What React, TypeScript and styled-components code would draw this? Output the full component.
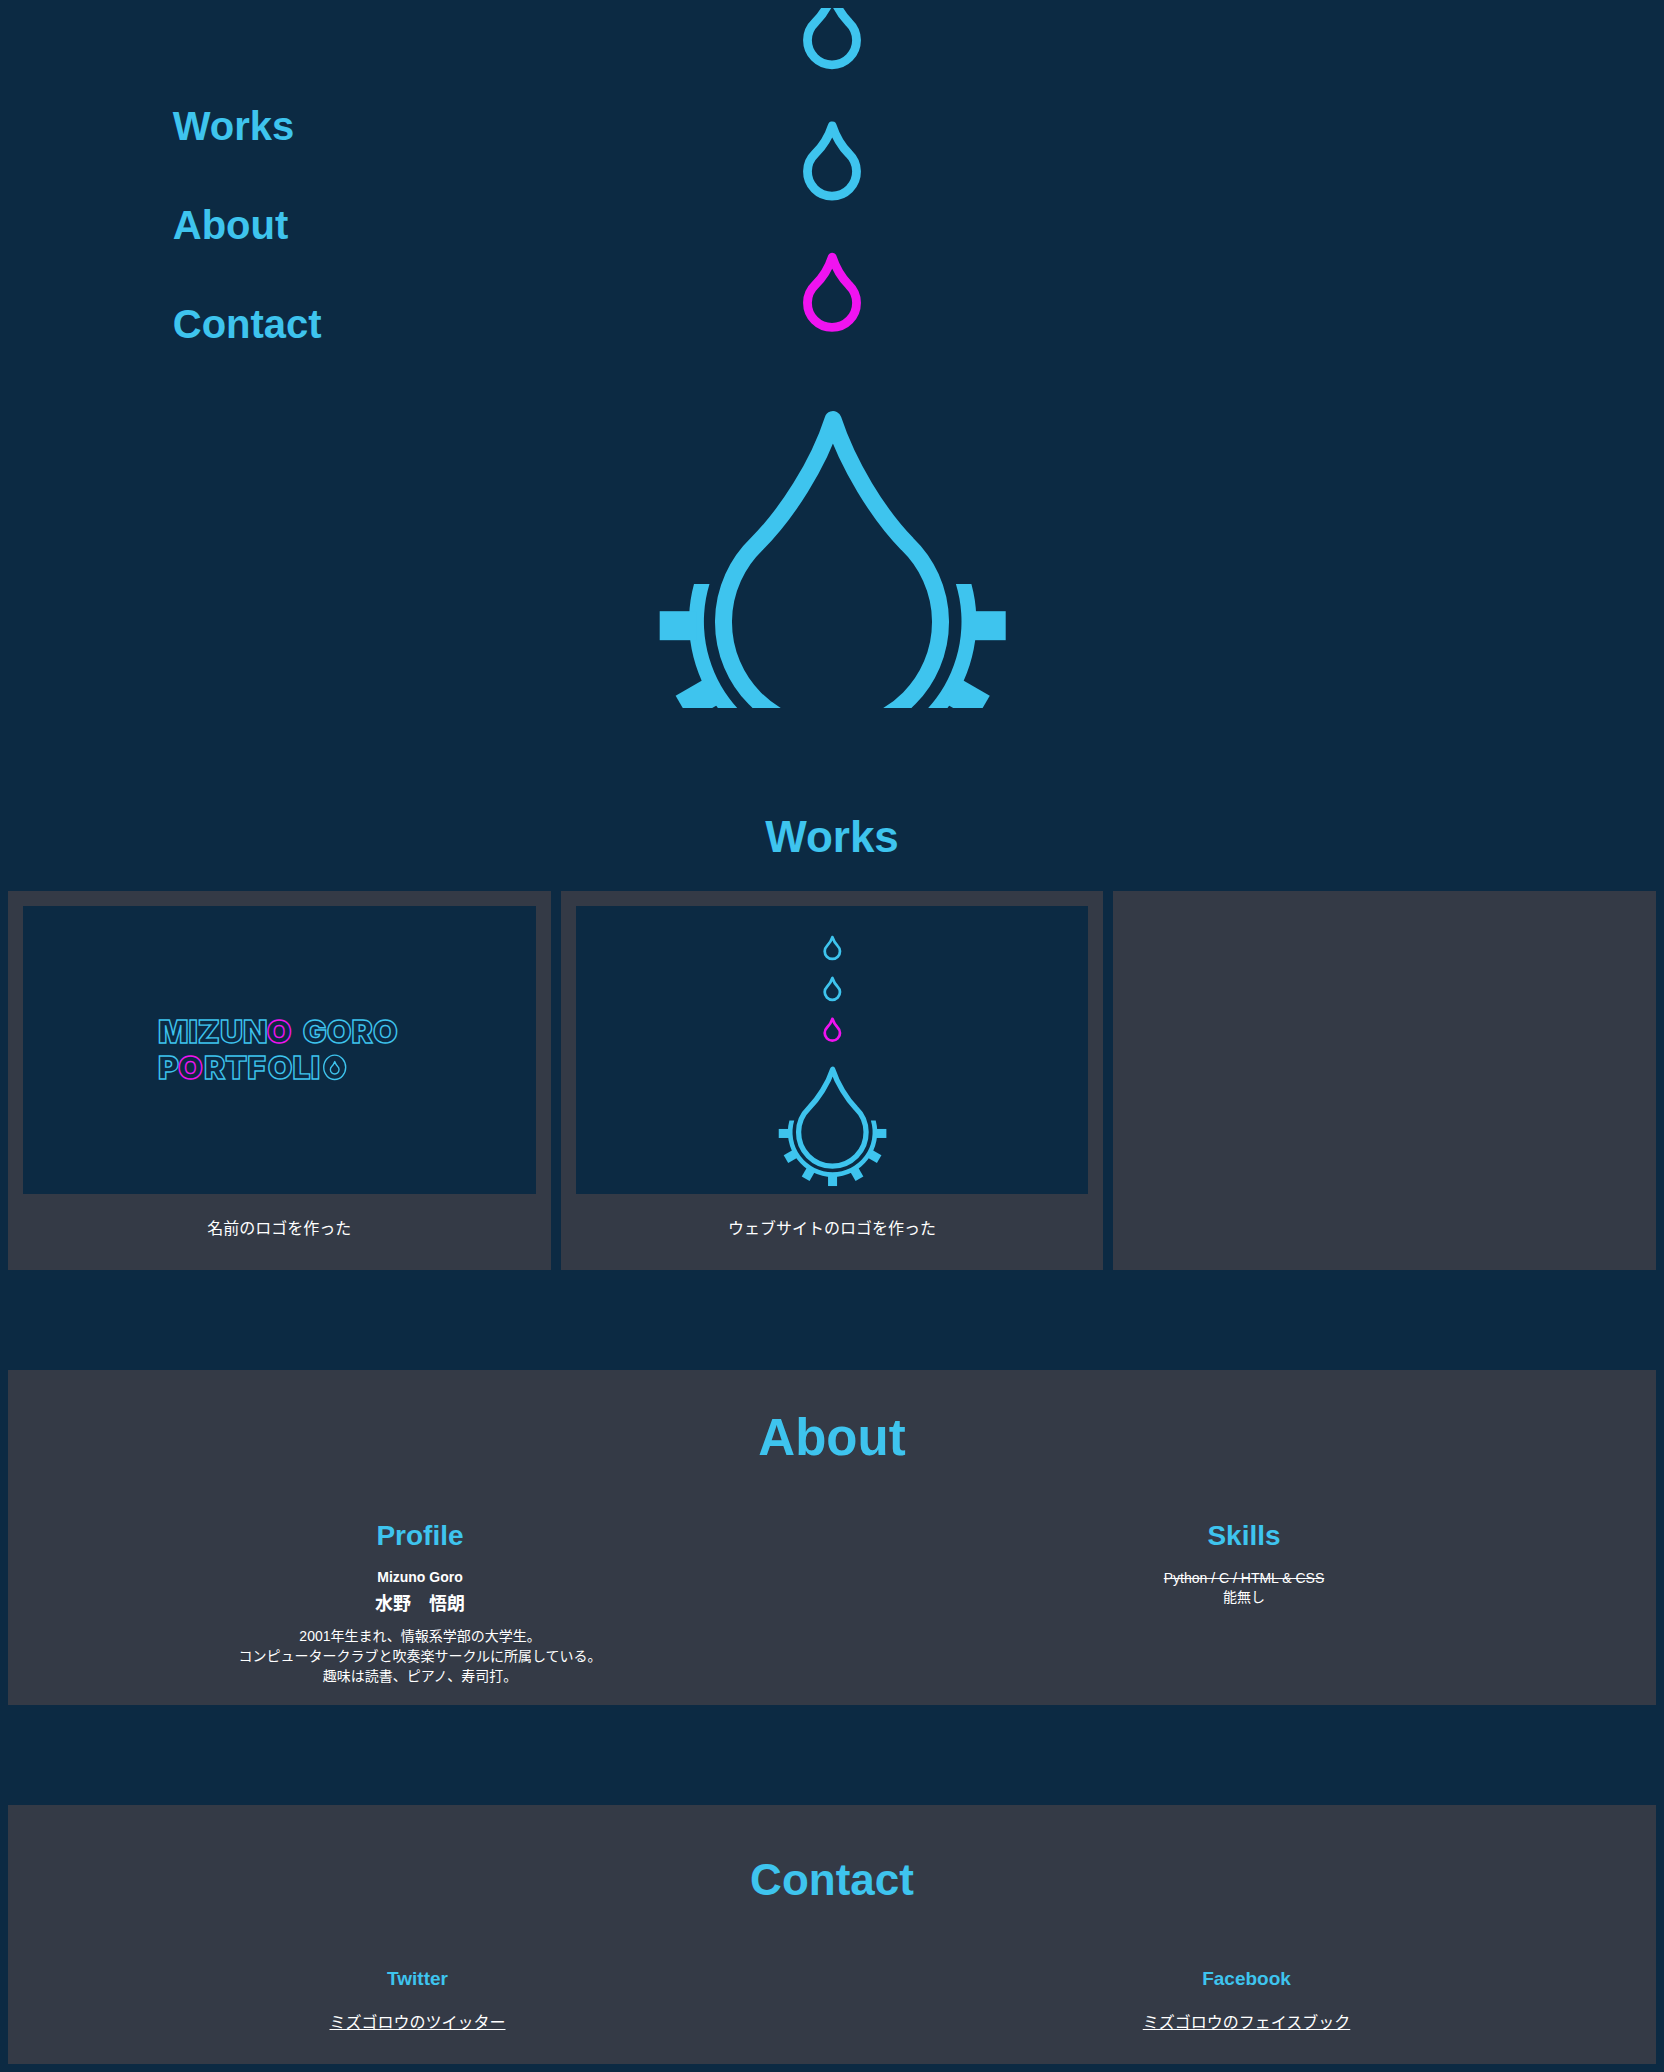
import React from "react";
import styled, { createGlobalStyle } from "styled-components";

const colors = {
  page: "#0c2a43",
  panel: "#343a46",
  accent: "#3ec4ee",
  magenta: "#f013f0",
  text: "#ffffff",
};

const GlobalStyle = createGlobalStyle`
  body {
    margin: 8px;
    background: ${colors.page};
    color: ${colors.text};
    font-family: "Liberation Sans", "Noto Sans CJK JP", sans-serif;
    font-size: 16px;
    line-height: 24px;
  }
  h1, h2, h3, p, ul {
    margin: 0;
    padding: 0;
  }
`;

const Page = styled.div`
  display: flex;
  flex-direction: column;
  gap: 100px;
`;

const Hero = styled.header`
  display: grid;
  height: 700px;
  overflow: hidden;
  > * {
    grid-area: 1 / 1;
    min-height: 0;
  }
`;

const HeroArt = styled.svg`
  display: block;
  width: 100%;
  height: 100%;
`;

const NavList = styled.ul`
  display: flex;
  flex-direction: column;
  align-items: flex-start;
  gap: 53px;
  padding: 95px 10% 0;
  list-style: none;
`;

const NavLink = styled.a`
  display: block;
  color: ${colors.accent};
  font-size: 40px;
  font-weight: bold;
  line-height: 46px;
  text-decoration: none;
`;

const Section = styled.section<{ $top: number }>`
  padding-top: ${(p) => p.$top}px;
  text-align: center;
`;

const Panel = styled(Section)<{ $bottom: number }>`
  padding-bottom: ${(p) => p.$bottom}px;
  background: ${colors.panel};
`;

const Title = styled.h2<{ $large?: boolean; $after: number }>`
  margin-bottom: ${(p) => p.$after}px;
  color: ${colors.accent};
  font-size: ${(p) => (p.$large ? 51 : 44)}px;
  line-height: ${(p) => (p.$large ? 58 : 50)}px;
`;

const Columns = styled.div<{ $count: number; $gap?: number }>`
  display: grid;
  grid-template-columns: repeat(${(p) => p.$count}, minmax(0, 1fr));
  gap: ${(p) => p.$gap ?? 0}px;
`;

const Card = styled.article`
  padding: 15px;
  background: ${colors.panel};
`;

const Thumb = styled.svg`
  display: block;
  width: 100%;
  aspect-ratio: 16 / 9;
  background: ${colors.page};
`;

const Caption = styled.p`
  margin: 23px 0 14px;
`;

const Subtitle = styled.h3<{ $small?: boolean }>`
  margin-bottom: ${(p) => (p.$small ? 21 : 17)}px;
  color: ${colors.accent};
  font-size: ${(p) => (p.$small ? 19 : 28)}px;
  line-height: ${(p) => (p.$small ? 22 : 32)}px;
`;

const RomanName = styled.p`
  font-size: 14px;
  font-weight: bold;
  line-height: 16px;
`;

const KanjiName = styled.p`
  margin: 6px 0 9px;
  font-size: 18px;
  font-weight: bold;
  line-height: 26px;
`;

const Body = styled.p`
  font-size: 14px;
  line-height: 20px;
`;

const Struck = styled.s`
  display: block;
  font-size: 14px;
  line-height: 18px;
`;

const OutLink = styled.a`
  color: ${colors.text};
`;

const LogoText = styled.text`
  font-family: Inter, "Liberation Sans", sans-serif;
  font-size: 32px;
  font-weight: 900;
  fill: none;
  stroke: ${colors.accent};
  stroke-width: 1.4px;
`;

const MagentaLetter = styled.tspan`
  stroke: ${colors.magenta};
`;

type DropProps = {
  x: number;
  y: number;
  scale?: number;
  stroke: number;
  color?: string;
};

// A drop whose round part has a radius of 108.5 around its origin.
const Drop = ({ x, y, scale = 1, stroke, color = colors.accent }: DropProps) => (
  <path
    transform={`translate(${x} ${y}) scale(${scale})`}
    d="M1-202.2C-13.7-156.7-45.3-107.7-75.3-77.7A108.5 108.5 0 1 0 75.3-77.7C46-107.7 16-156.7 1-202.2Z"
    fill="none"
    stroke={color}
    strokeWidth={stroke}
    strokeLinejoin="round"
  />
);

// The level teeth sit a little lower than the centre of the ring.
const teeth = [
  { angle: 0, drop: 4 },
  { angle: 30, drop: 0 },
  { angle: 60, drop: 0 },
  { angle: 90, drop: 0 },
  { angle: 120, drop: 0 },
  { angle: 150, drop: 0 },
  { angle: 180, drop: 4 },
];

const DropLogo = () => (
  <>
    <Drop x={824} y={145.7} scale={0.226} stroke={39} />
    <Drop x={824} y={277} scale={0.226} stroke={39} />
    <Drop x={824} y={408.3} scale={0.226} stroke={39} color={colors.magenta} />
    <Drop x={824} y={727.2} stroke={17} />
    <g transform="translate(824.7 727.2)" fill={colors.accent}>
      <path d="M-138.7-37.7A143.7 143.7 0 1 0 138.7-37.7H123.2A128.8 128.8 0 1 1-123.2-37.7Z" />
      {teeth.map(({ angle, drop }) => (
        <rect
          key={angle}
          x={136}
          y={-14.5}
          width={37}
          height={29}
          transform={`translate(0 ${drop}) rotate(${angle})`}
        />
      ))}
    </g>
  </>
);

const NameLogo = () => (
  <>
    <LogoText x={135} y={137}>
      MIZUN<MagentaLetter x={244}>O</MagentaLetter>{" "}
      <tspan x={280}>GORO</tspan>
    </LogoText>
    <LogoText x={135} y={173}>
      P<MagentaLetter x={155}>O</MagentaLetter>
      <tspan x={181}>RTF</tspan>
      <tspan x={245}>OLI</tspan>
    </LogoText>
    <ellipse
      cx={312}
      cy={161.7}
      rx={11}
      ry={12.2}
      fill="none"
      stroke={colors.accent}
      strokeWidth={1.4}
    />
    <Drop x={312} y={164} scale={0.04} stroke={34} />
  </>
);

const App = () => (
  <>
    <GlobalStyle />
    <Page>
      <Hero>
        <HeroArt viewBox="0 0 1648 927" preserveAspectRatio="xMidYMid slice" aria-hidden="true">
          <DropLogo />
        </HeroArt>
        <nav>
          <NavList>
            <li><NavLink href="#works">Works</NavLink></li>
            <li><NavLink href="#about">About</NavLink></li>
            <li><NavLink href="#contact">Contact</NavLink></li>
          </NavList>
        </nav>
      </Hero>

      <Section id="works" $top={4}>
        <Title $after={29}>Works</Title>
        <Columns $count={3} $gap={10}>
          <Card>
            <Thumb viewBox="0 0 513 289">
              <NameLogo />
            </Thumb>
            <Caption>名前のロゴを作った</Caption>
          </Card>
          <Card>
            <Thumb viewBox="0 0 1648 927" aria-hidden="true">
              <DropLogo />
            </Thumb>
            <Caption>ウェブサイトのロゴを作った</Caption>
          </Card>
          <Card />
        </Columns>
      </Section>

      <Panel id="about" $top={39} $bottom={19}>
        <Title $large $after={53}>About</Title>
        <Columns $count={2}>
          <div>
            <Subtitle>Profile</Subtitle>
            <RomanName>Mizuno Goro</RomanName>
            <KanjiName>水野　悟朗</KanjiName>
            <Body>
              2001年生まれ、情報系学部の大学生。
              <br />
              コンピュータークラブと吹奏楽サークルに所属している。
              <br />
              趣味は読書、ピアノ、寿司打。
            </Body>
          </div>
          <div>
            <Subtitle>Skills</Subtitle>
            <Struck>Python / C / HTML &amp; CSS</Struck>
            <Body>能無し</Body>
          </div>
        </Columns>
      </Panel>

      <Panel id="contact" $top={50} $bottom={29}>
        <Title $after={63}>Contact</Title>
        <Columns $count={2} $gap={10}>
          <div>
            <Subtitle $small>Twitter</Subtitle>
            <OutLink href="#twitter">ミズゴロウのツイッター</OutLink>
          </div>
          <div>
            <Subtitle $small>Facebook</Subtitle>
            <OutLink href="#facebook">ミズゴロウのフェイスブック</OutLink>
          </div>
        </Columns>
      </Panel>
    </Page>
  </>
);

export default App;
